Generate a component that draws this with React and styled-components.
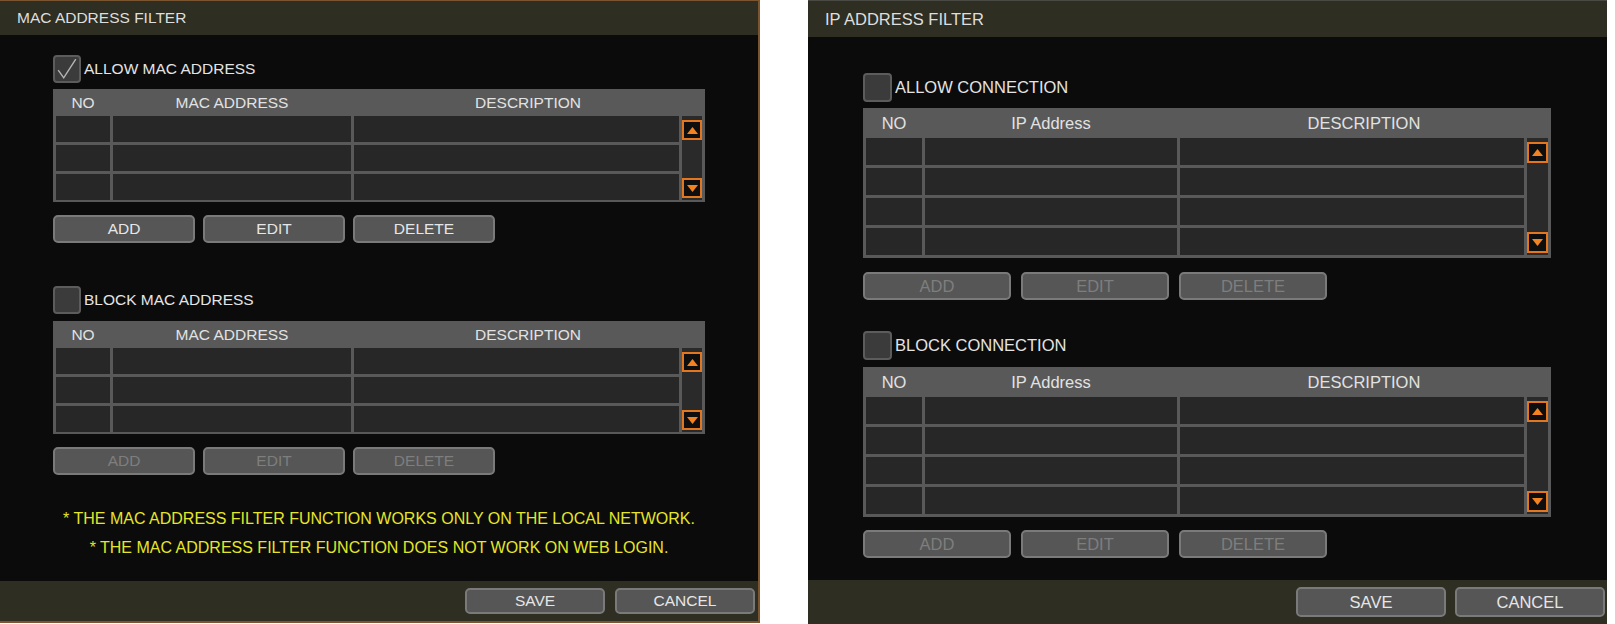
import React from "react";
import styled, { createGlobalStyle } from "styled-components";

const GlobalStyle = createGlobalStyle`
  html, body { margin: 0; padding: 0; background: #ffffff; }
  body { font-family: "Liberation Sans", Arial, sans-serif; }
`;

const Page = styled.div`
  display: flex;
  align-items: flex-start;
  gap: 48px;
  width: 1615px;
  height: 624px;
  overflow: hidden;
`;

const Panel = styled.section`
  display: flex;
  flex-direction: column;
  box-sizing: border-box;
  width: ${(p) => p.$w}px;
  height: ${(p) => p.$h}px;
  background: #0b0b0b;
  border-top: 1px solid ${(p) => p.$edge};
  border-right: ${(p) => p.$side}px solid ${(p) => p.$edge};
  border-bottom: ${(p) => p.$side}px solid ${(p) => p.$edge};
  font-size: ${(p) => p.$fs}px;
`;

const TitleBar = styled.header`
  display: flex;
  align-items: center;
  flex: 0 0 ${(p) => p.$h}px;
  padding-left: ${(p) => p.$pl}px;
  background: #2e2e23;
  color: #dedede;
  font-size: 1em;
`;

const Content = styled.div`
  display: flex;
  flex-direction: column;
  flex: 1;
  padding-top: ${(p) => p.$pt}px;
`;

const Group = styled.div`
  display: flex;
  flex-direction: column;
  padding-left: ${(p) => p.$pl}px;
  margin-top: ${(p) => p.$mt || 0}px;
`;

const CheckRow = styled.label`
  display: flex;
  align-items: center;
  gap: 3px;
  height: ${(p) => p.$box}px;
  color: #e4e4e4;
`;

const Box = styled.span`
  box-sizing: border-box;
  display: flex;
  align-items: center;
  justify-content: center;
  width: ${(p) => p.$box}px;
  height: ${(p) => p.$box}px;
  border: 2px solid #5c5c5c;
  border-radius: 4px;
  background: #3b3b3b;
`;

const Table = styled.div`
  box-sizing: border-box;
  margin-top: ${(p) => p.$mt}px;
  width: ${(p) => p.$w}px;
  padding: 0 3px ${(p) => p.$pb}px 3px;
  background: #595959;
`;

const HeadRow = styled.div`
  display: grid;
  grid-template-columns: ${(p) => p.$c1}px ${(p) => p.$c2}px 1fr;
  column-gap: 3px;
  height: ${(p) => p.$h}px;
  align-items: center;
  color: #e2e2e2;
  text-align: center;
`;

const BodyRow = styled.div`
  display: flex;
  gap: 3px;
`;

const CellGrid = styled.div`
  display: grid;
  grid-template-columns: ${(p) => p.$c1}px ${(p) => p.$c2}px ${(p) => p.$c3}px;
  grid-auto-rows: ${(p) => p.$rh}px;
  gap: 3px;
`;

const Cell = styled.div`
  background: #272727;
`;

const ScrollTrack = styled.div`
  display: flex;
  flex-direction: column;
  justify-content: space-between;
  align-items: center;
  width: ${(p) => p.$w}px;
  padding: 4px 0 2px;
  box-sizing: border-box;
  background: #2a2a2a;
`;

const ScrollBtn = styled.div`
  box-sizing: border-box;
  display: flex;
  align-items: center;
  justify-content: center;
  width: ${(p) => p.$s}px;
  height: ${(p) => p.$s}px;
  background: #0e0e0e;
  border: 2px solid #e3771f;
`;

const ButtonRow = styled.div`
  display: flex;
  gap: ${(p) => p.$gap}px;
  margin-top: ${(p) => p.$mt}px;
`;

const Button = styled.button`
  box-sizing: border-box;
  width: ${(p) => p.$w}px;
  height: ${(p) => p.$h}px;
  padding: 0;
  border: 2px solid #7a7a7a;
  border-radius: 5px;
  background: #565656;
  color: ${(p) => (p.disabled ? "#7e7e7e" : "#e6e6e6")};
  font-family: inherit;
  font-size: 1em;
  line-height: 1;
`;

const Notes = styled.div`
  margin-top: 29px;
  text-align: center;
  color: #e6e628;
  font-size: 16px;
  line-height: 29px;
`;

const Footer = styled.footer`
  display: flex;
  align-items: center;
  justify-content: flex-end;
  gap: ${(p) => p.$gap}px;
  flex: 0 0 ${(p) => p.$h}px;
  padding-right: ${(p) => p.$pr}px;
  background: #2e2e23;
`;

function Arrow({ up }) {
  return (
    <svg width="11" height="7" viewBox="0 0 11 7">
      <polygon
        points={up ? "5.5,0 11,7 0,7" : "0,0 11,0 5.5,7"}
        fill="#f28322"
      />
    </svg>
  );
}

function Check({ checked, box }) {
  return (
    <Box $box={box}>
      {checked && (
        <svg width={box - 6} height={box - 6} viewBox="0 0 20 20">
          <polyline
            points="2,11 7,18 18,1"
            fill="none"
            stroke="#b4b4b4"
            strokeWidth="1.3"
          />
        </svg>
      )}
    </Box>
  );
}

function FilterTable({ cfg, col2, mt }) {
  const cells = [];
  for (let r = 0; r < cfg.rows; r++) {
    cells.push(<Cell key={`a${r}`} />, <Cell key={`b${r}`} />, <Cell key={`c${r}`} />);
  }
  return (
    <Table $mt={mt} $w={cfg.tw} $pb={cfg.pb}>
      <HeadRow $c1={cfg.c1} $c2={cfg.c2} $h={cfg.hh}>
        <span>NO</span>
        <span>{col2}</span>
        <span>DESCRIPTION</span>
      </HeadRow>
      <BodyRow>
        <CellGrid $c1={cfg.c1} $c2={cfg.c2} $c3={cfg.c3} $rh={cfg.rh}>
          {cells}
        </CellGrid>
        <ScrollTrack $w={cfg.sw}>
          <ScrollBtn $s={cfg.sb}>
            <Arrow up />
          </ScrollBtn>
          <ScrollBtn $s={cfg.sb}>
            <Arrow />
          </ScrollBtn>
        </ScrollTrack>
      </BodyRow>
    </Table>
  );
}

function Buttons({ cfg, disabled, mt }) {
  return (
    <ButtonRow $gap={cfg.bgap} $mt={mt}>
      {["ADD", "EDIT", "DELETE"].map((t) => (
        <Button key={t} $w={cfg.bw} $h={cfg.bh} disabled={disabled}>
          {t}
        </Button>
      ))}
    </ButtonRow>
  );
}

const MAC = {
  tw: 652, c1: 54, c2: 238, c3: 325, sw: 20, sb: 20, hh: 27, rh: 26, rows: 3, pb: 2,
  bw: 142, bh: 28, bgap: 8, box: 28,
};

const IP = {
  tw: 688, c1: 56, c2: 252, c3: 344, sw: 21, sb: 21, hh: 30, rh: 27, rows: 4, pb: 3,
  bw: 148, bh: 28, bgap: 10, box: 29,
};

export default function App() {
  return (
    <>
      <GlobalStyle />
      <Page>
        <Panel $w={760} $h={623} $edge="#7b5530" $side={2} $fs={15.5}>
          <TitleBar $h={34} $pl={17}>MAC ADDRESS FILTER</TitleBar>
          <Content $pt={20}>
            <Group $pl={53}>
              <CheckRow $box={MAC.box}>
                <Check checked box={MAC.box} />
                ALLOW MAC ADDRESS
              </CheckRow>
              <FilterTable cfg={MAC} col2="MAC ADDRESS" mt={6} />
              <Buttons cfg={MAC} mt={13} />
            </Group>
            <Group $pl={53} $mt={43}>
              <CheckRow $box={MAC.box}>
                <Check box={MAC.box} />
                BLOCK MAC ADDRESS
              </CheckRow>
              <FilterTable cfg={MAC} col2="MAC ADDRESS" mt={7} />
              <Buttons cfg={MAC} mt={13} disabled />
            </Group>
            <Notes>
              * THE MAC ADDRESS FILTER FUNCTION WORKS ONLY ON THE LOCAL NETWORK.
              <br />* THE MAC ADDRESS FILTER FUNCTION DOES NOT WORK ON WEB LOGIN.
            </Notes>
          </Content>
          <Footer $h={40} $gap={10} $pr={3}>
            <Button $w={140} $h={26}>SAVE</Button>
            <Button $w={140} $h={26}>CANCEL</Button>
          </Footer>
        </Panel>

        <Panel $w={799} $h={624} $edge="#4a4a44" $side={0} $fs={16.5}>
          <TitleBar $h={36} $pl={17}>IP ADDRESS FILTER</TitleBar>
          <Content $pt={36}>
            <Group $pl={55}>
              <CheckRow $box={IP.box}>
                <Check box={IP.box} />
                ALLOW CONNECTION
              </CheckRow>
              <FilterTable cfg={IP} col2="IP Address" mt={6} />
              <Buttons cfg={IP} mt={14} disabled />
            </Group>
            <Group $pl={55} $mt={31}>
              <CheckRow $box={IP.box}>
                <Check box={IP.box} />
                BLOCK CONNECTION
              </CheckRow>
              <FilterTable cfg={IP} col2="IP Address" mt={7} />
              <Buttons cfg={IP} mt={13} disabled />
            </Group>
          </Content>
          <Footer $h={44} $gap={9} $pr={2}>
            <Button $w={150} $h={30}>SAVE</Button>
            <Button $w={150} $h={30}>CANCEL</Button>
          </Footer>
        </Panel>
      </Page>
    </>
  );
}
